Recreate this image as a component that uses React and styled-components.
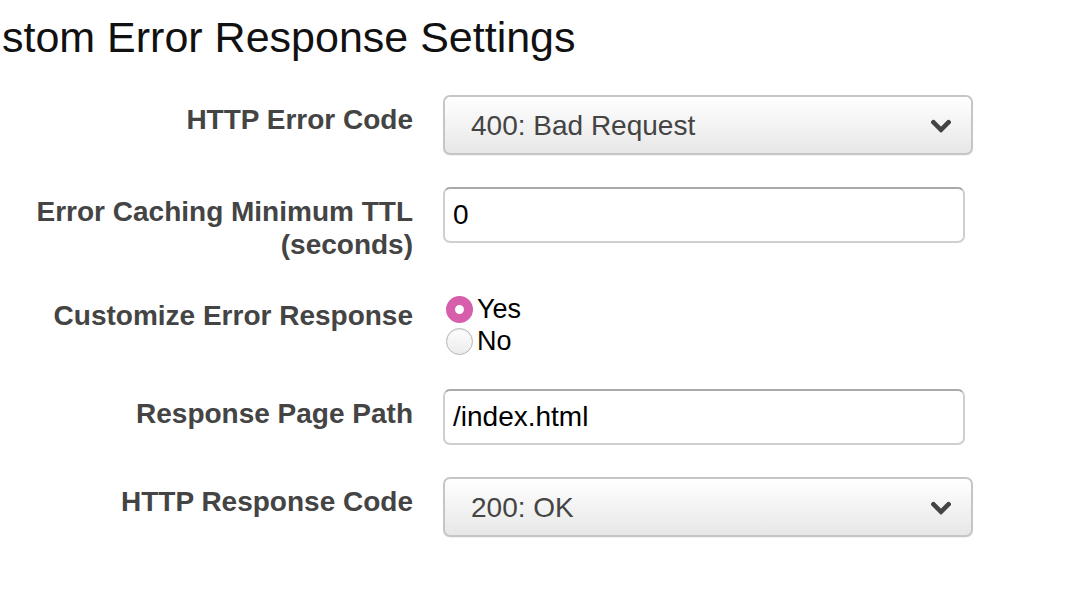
import React from "react";
import styled, { createGlobalStyle } from "styled-components";

const GlobalStyle = createGlobalStyle`
    html, body {
        margin: 0;
        padding: 0;
        background: #fff;
        overflow: hidden;
    }
    body {
        font-family: "Liberation Sans", Arial, Helvetica, sans-serif;
    }
`;

function Chevron() {
    return (
        <svg width="20" height="13" viewBox="0 0 20 13">
            <path d="M2.5 2.5 L10 10 L17.5 2.5" fill="none" stroke="#444" strokeWidth="4.6" strokeLinecap="square" strokeLinejoin="miter" />
        </svg>
    );
}

function SelectField({ value, options }) {
    return (
        <SelectWrap>
            <Select defaultValue={value}>
                {options.map((o) => (
                    <option key={o}>{o}</option>
                ))}
            </Select>
            <ChevronBox>
                <Chevron />
            </ChevronBox>
        </SelectWrap>
    );
}

export default function App() {
    return (
        <Page>
            <GlobalStyle />
            <Title>Custom Error Response Settings</Title>
            <Form>
                <Row>
                    <Label>HTTP Error Code</Label>
                    <SelectField value="400: Bad Request" options={["400: Bad Request", "403: Forbidden", "404: Not Found", "500: Internal Server Error"]} />
                </Row>
                <Row>
                    <Label>
                        Error Caching Minimum TTL
                        <br />
                        (seconds)
                    </Label>
                    <TextInput defaultValue="0" />
                </Row>
                <Row>
                    <Label $top={6}>Customize Error Response</Label>
                    <RadioGroup>
                        <RadioLine>
                            <Radio type="radio" name="custom" defaultChecked />
                            Yes
                        </RadioLine>
                        <RadioLine>
                            <Radio type="radio" name="custom" />
                            No
                        </RadioLine>
                    </RadioGroup>
                </Row>
                <Row>
                    <Label>Response Page Path</Label>
                    <TextInput defaultValue="/index.html" />
                </Row>
                <Row>
                    <Label>HTTP Response Code</Label>
                    <SelectField value="200: OK" options={["200: OK", "404: Not Found"]} />
                </Row>
            </Form>
        </Page>
    );
}

const Page = styled.div`
    width: 1068px;
    height: 614px;
    overflow: hidden;
`
const Title = styled.h1`
    margin: 13px 0 0 -53px;
    font-size: 43px;
    font-weight: 400;
    line-height: 49px;
    color: #111;
    white-space: nowrap;
`
const Form = styled.div`
    display: flex;
    flex-direction: column;
    gap: 32px;
    margin-top: 33px;
`
const Row = styled.div`
    display: flex;
    align-items: flex-start;
    gap: 30px;
`
const Label = styled.div`
    width: 413px;
    flex: none;
    box-sizing: border-box;
    padding-top: ${(p) => p.$top ?? 8}px;
    text-align: right;
    font-size: 28px;
    font-weight: 700;
    line-height: 33px;
    color: #444;
`
const SelectWrap = styled.div`
    position: relative;
    width: 530px;
    height: 60px;
`
const Select = styled.select`
    appearance: none;
    -webkit-appearance: none;
    width: 100%;
    height: 100%;
    box-sizing: border-box;
    margin: 0;
    padding: 0 60px 0 26px;
    border: 2px solid #c6c6c6;
    border-radius: 7px;
    background: linear-gradient(#ffffff, #e7e7e7);
    box-shadow: 0 1px 1px rgba(0, 0, 0, 0.06);
    font-family: "Liberation Sans", Arial, sans-serif;
    font-size: 28px;
    color: #444;
    outline: none;
`
const ChevronBox = styled.div`
    position: absolute;
    right: 22px;
    top: 50%;
    transform: translateY(-40%);
    display: flex;
    pointer-events: none;
`
const TextInput = styled.input`
    width: 522px;
    height: 56px;
    box-sizing: border-box;
    margin: 0;
    padding: 0 8px;
    border: 2px solid #cfcfcf;
    border-top-color: #a9a9a9;
    border-radius: 7px;
    background: #fff;
    font-family: "Liberation Sans", Arial, sans-serif;
    font-size: 28px;
    color: #000;
    outline: none;
`
const RadioGroup = styled.div`
    display: flex;
    flex-direction: column;
`
const RadioLine = styled.label`
    display: flex;
    align-items: center;
    gap: 4px;
    height: 32px;
    padding-left: 3px;
    font-size: 27px;
    color: #000;
`
const Radio = styled.input`
    appearance: none;
    -webkit-appearance: none;
    width: 27px;
    height: 27px;
    margin: 0;
    box-sizing: border-box;
    border-radius: 50%;
    border: 1.5px solid #b5b5b5;
    background: linear-gradient(#fdfdfd, #ececec);
    box-shadow: inset 0 1px 1px rgba(0, 0, 0, 0.08);

    &:checked {
        border: 9.5px solid #d75eab;
        background: #fff;
        box-shadow: none;
    }
`
